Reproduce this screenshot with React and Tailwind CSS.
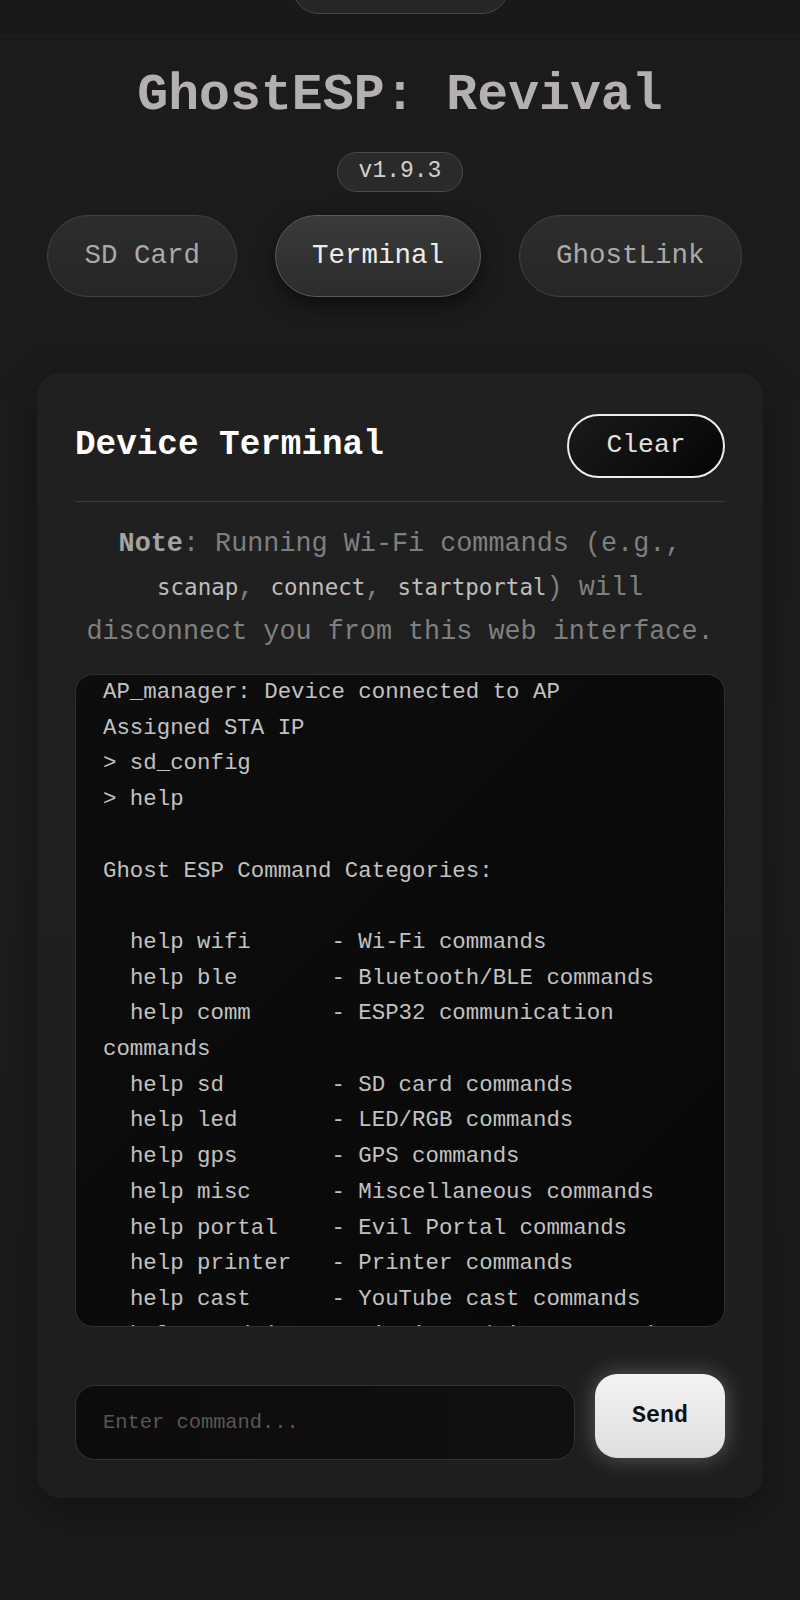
const mono = { fontFamily: '"Liberation Mono", "Courier New", monospace' };
const codeFont = { fontFamily: '"DejaVu Sans Mono", monospace' };

const lines = [
  "AP_manager: Device connected to AP",
  "Assigned STA IP",
  "> sd_config",
  "> help",
  "",
  "Ghost ESP Command Categories:",
  "",
  "  help wifi      - Wi-Fi commands",
  "  help ble       - Bluetooth/BLE commands",
  "  help comm      - ESP32 communication commands",
  "  help sd        - SD card commands",
  "  help led       - LED/RGB commands",
  "  help gps       - GPS commands",
  "  help misc      - Miscellaneous commands",
  "  help portal    - Evil Portal commands",
  "  help printer   - Printer commands",
  "  help cast      - YouTube cast commands",
  "  help wardrive  - Wi-Fi wardrive commands",
];

const tabs = ["SD Card", "Terminal", "GhostLink"];

export default function App() {
  return (
    <div
      className="min-h-screen overflow-hidden bg-[linear-gradient(180deg,#1b1b1b_0%,#1d1d1d_50%,#1a1a1a_100%)] pb-[103px]"
      style={mono}
    >
      <div className="flex h-[36px] justify-center border-b border-[#1f1f1f] bg-[#191919]">
        <div className="-mt-[40px] h-[54px] w-[217px] rounded-full border border-[#474747] bg-[#262626]" />
      </div>

      <h1 className="mt-[34px] text-center text-[51.5px] font-bold leading-none text-[#b5b0b0]">
        GhostESP: Revival
      </h1>

      <div className="mt-[30px] flex justify-center">
        <span className="flex h-[40px] w-[126px] items-center justify-center rounded-full border border-[#4a4a4a] bg-[#2a2a2a] text-[23px] text-[#d0d0d0]">
          v1.9.3
        </span>
      </div>

      <nav className="mt-[23px] flex justify-center gap-[38px] pr-[11px]">
        {tabs.map((tab) => (
          <button
            key={tab}
            type="button"
            className={`flex h-[82px] items-center rounded-full border px-[36px] text-[27.5px] ${
              tab === "Terminal"
                ? "border-[#5a5a5a] bg-[linear-gradient(180deg,#3a3a3a,#2c2c2c)] text-[#ececec] shadow-[0_8px_22px_rgba(0,0,0,.55)]"
                : "border-[#414141] bg-[linear-gradient(180deg,#2d2d2d,#262626)] text-[#a9a9a9]"
            }`}
          >
            {tab}
          </button>
        ))}
      </nav>

      <section className="mx-[37px] mt-[76px] rounded-[24px] bg-[linear-gradient(180deg,#202020,#1e1e1e)] px-[38px] pb-[40px] pt-[41px] shadow-[0_10px_40px_rgba(0,0,0,.35)]">
        <div className="flex h-[88px] items-start justify-between border-b border-[#3a3a3a]">
          <h2 className="mt-[14px] text-[34.3px] font-bold leading-none text-white">
            Device Terminal
          </h2>
          <button
            type="button"
            className="flex h-[64px] w-[158px] items-center justify-center rounded-full border-2 border-[#eeeeee] bg-[linear-gradient(135deg,#1a1a1a,#050505)] text-[26.3px] text-[#e2e2e2]"
          >
            Clear
          </button>
        </div>

        <p className="mt-[21px] text-center text-[26.8px] leading-[43.5px] text-[#7f7f7f]">
          <strong className="font-bold text-[#a3a3a3]">Note</strong>: Running Wi-Fi commands (e.g.,{" "}
          <code className="text-[22.5px] text-[#bdbdbd]" style={codeFont}>
            scanap
          </code>
          ,{" "}
          <code className="text-[22.5px] text-[#bdbdbd]" style={codeFont}>
            connect
          </code>
          ,{" "}
          <code className="text-[22.5px] text-[#bdbdbd]" style={codeFont}>
            startportal
          </code>
          ) will disconnect you from this web interface.
        </p>

        <div className="mt-[20px] h-[653px] overflow-hidden rounded-[18px] border border-[#303030] bg-[linear-gradient(135deg,#0d0d0d,#080808)] px-[27px]">
          <pre
            className="whitespace-pre-wrap text-[22.4px] leading-[35.7px] text-[#c2c2c2]"
            style={mono}
          >
            {lines.join("\n")}
          </pre>
        </div>

        <div className="mt-[47px] flex items-end gap-[20px]">
          <input
            className="mb-[-2px] h-[75px] min-w-0 flex-1 rounded-[20px] border border-[#333333] bg-[linear-gradient(90deg,#0d0b0b,#110f0f)] px-[27px] text-[20.4px] text-[#dddddd] outline-none placeholder:text-[#575757]"
            style={mono}
            placeholder="Enter command..."
          />
          <button
            type="button"
            className="h-[84px] w-[130px] rounded-[22px] bg-[linear-gradient(180deg,#f3f3f3,#dedede)] text-[23.3px] font-bold text-[#111] shadow-[0_0_22px_rgba(255,255,255,.28)]"
            style={mono}
          >
            Send
          </button>
        </div>
      </section>
    </div>
  );
}
